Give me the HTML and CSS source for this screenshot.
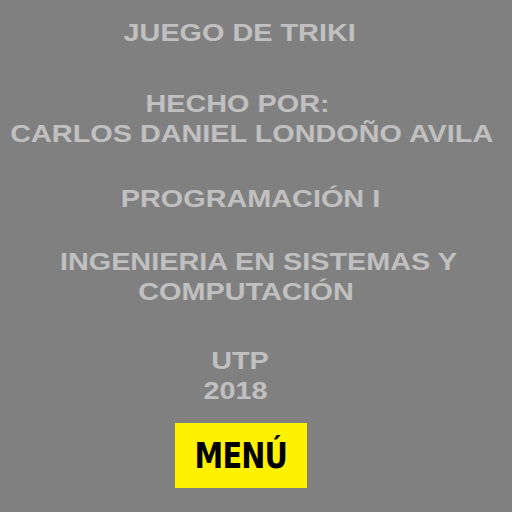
FILE: index.html
```html
<!DOCTYPE html>
<html lang="es">
<head>
<meta charset="utf-8">
<title>Juego de Triki</title>
<link rel="stylesheet" href="styles.css">
</head>
<body>
<main class="screen">
  <div class="credits">
    <p class="block"><span class="line l-title">JUEGO DE TRIKI</span></p>
    <p class="block b-author"><span class="line l-hecho">HECHO POR:</span><span class="line l-name">CARLOS DANIEL LONDOÑO AVILA</span></p>
    <p class="block b-course"><span class="line l-course">PROGRAMACIÓN I</span></p>
    <p class="block b-career"><span class="line l-career">INGENIERIA EN SISTEMAS Y</span><span class="line l-comp">COMPUTACIÓN</span></p>
    <p class="block b-uni"><span class="line l-utp">UTP</span><span class="line l-year">2018</span></p>
  </div>
  <button class="menu-btn" type="button"><span class="menu-label">MENÚ</span></button>
</main>
</body>
</html>
```
FILE: styles.css
```css
html, body {
  margin: 0;
  padding: 0;
  background: #808080;
}
.screen {
  width: 512px;
  height: 512px;
  display: flex;
  flex-direction: column;
  align-items: center;
  padding-top: 18px;
  box-sizing: border-box;
}
.credits {
  display: flex;
  flex-direction: column;
  align-items: center;
  width: 100%;
}
.block {
  margin: 0;
  width: 100%;
  display: flex;
  flex-direction: column;
  align-items: center;
  font-family: "Liberation Sans", Arial, sans-serif;
  font-weight: bold;
  font-size: 23px;
  line-height: 30px;
  color: #c0c0c0;
  white-space: nowrap;
}
.line {
  display: block;
  transform: scaleX(1.253);
}
.l-title { margin-right: 32px; }
.l-hecho { margin-right: 37px; }
.l-name { margin-right: 9px; }
.l-course { margin-right: 12px; }
.l-career { margin-left: 4px; }
.l-comp { margin-right: 19px; }
.l-utp { margin-right: 33px; }
.l-year { margin-right: 41px; }
.b-author { margin-top: 41px; }
.b-course { margin-top: 35px; }
.b-career { margin-top: 33px; }
.b-uni { margin-top: 39px; }
.menu-btn {
  margin-top: 17px;
  margin-right: 30px;
  width: 132px;
  height: 65px;
  border: none;
  padding: 0;
  background: #fff200;
  color: #000;
  display: flex;
  align-items: center;
  justify-content: center;
}
.menu-label {
  display: block;
  font-family: "DejaVu Sans", sans-serif;
  font-weight: bold;
  font-size: 36px;
  line-height: 40px;
  letter-spacing: -1px;
  transform: scaleX(0.8);
}
```
